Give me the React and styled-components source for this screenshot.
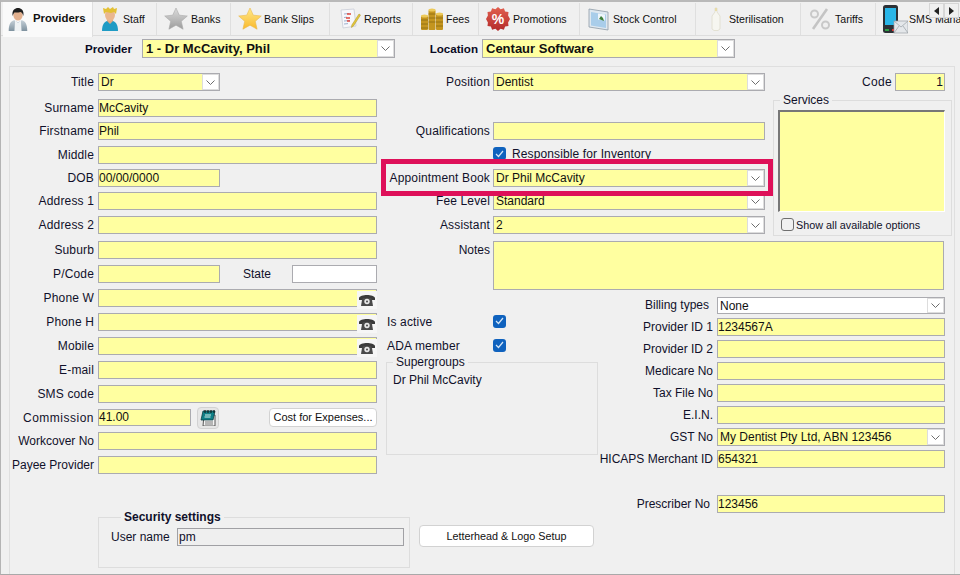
import styled, { createGlobalStyle } from "styled-components";

const GlobalStyle = createGlobalStyle`
  html, body {
    margin: 0;
    padding: 0;
    background: #f0f0f0;
  }
  * {
    box-sizing: border-box;
  }
`;

// TAB ICONS
const ProviderIcon = () => (
  <svg width="20" height="25" viewBox="0 0 28 32">
    <defs>
      <linearGradient id="jacket" x1="0" y1="0" x2="0" y2="1">
        <stop offset="0" stopColor="#c5d0d8" />
        <stop offset="1" stopColor="#7f929f" />
      </linearGradient>
    </defs>
    <path d="M1 32c0-10 3-14 8-15l5 3 5-3c5 1 8 5 8 15z" fill="url(#jacket)" />
    <path d="M10 17l4 4 4-4 1 15H9z" fill="#eef2f4" />
    <ellipse cx="14" cy="10" rx="6.5" ry="7.5" fill="#e2b08e" />
    <path d="M6.5 11C5 3 10 0 14 0s9 3 7.5 11c-1-3-2-5-4-5.500-3 1-7 1-8 .5-1.500 1-2 3-3 5z" fill="#1f1f1f" />
  </svg>
);

const StaffIcon = () => (
  <svg width="18" height="24" viewBox="0 0 18 24">
    <path d="M1 24c0-6 2-9 5-10h6c3 1 5 4 5 10z" fill="#1f9bc4" />
    <path d="M6 14l3 3 3-3v-2H6z" fill="#e3a77f" />
    <ellipse cx="9" cy="8" rx="5" ry="6" fill="#eab78f" />
    <path d="M3 7L2 1l3 1 2-2 2 2 3-2 1 2 3-1-1 6-2-2-3 1-5-1z" fill="#e3c034" />
  </svg>
);

const StarIcon = ({ id, from, to, edge }) => (
  <svg width="24" height="24" viewBox="0 0 24 24">
    <defs>
      <linearGradient id={id} x1="0" y1="0" x2="0" y2="1">
        <stop offset="0" stopColor={from} />
        <stop offset="1" stopColor={to} />
      </linearGradient>
    </defs>
    <path
      d="M12 1l3.300 7.200 8 .8-6 5.300 1.800 7.900L12 18.200 4.900 22.200l1.800-7.900-6-5.300 8-.8z"
      fill={`url(#${id})`}
      stroke={edge}
      strokeWidth=".6"
    />
  </svg>
);

const ReportIcon = () => (
  <svg width="22" height="22" viewBox="0 0 22 22">
    <path d="M2 2l13-1 2 17-13 2z" fill="#f7f7fb" stroke="#c8cbd6" strokeWidth=".8" />
    <path d="M5 6l5-.5M5 9.500l3-.3M5 13l6-.5M5 16l4-.4" stroke="#9db1cf" strokeWidth="1" />
    <path d="M8 6h4M7 10h4M8 13h3" stroke="#e0473f" strokeWidth="1.400" />
    <path d="M20 6l1.500 1-7 11-2 1.500.3-2.500z" fill="#e4c83b" stroke="#a98f25" strokeWidth=".5" />
  </svg>
);

const CoinStack = ({ x, top }) => (
  <g>
    <rect x={x} y={top} width="7" height={22 - top} rx="1" fill="#c4951f" />
    <ellipse cx={x + 3.5} cy={top} rx="3.500" ry="1.500" fill="#edca5a" />
    <path
      d={`M${x} ${top + 4}h7M${x} ${top + 8}h7M${x} ${top + 12}h7`}
      stroke="#8c6a12"
      strokeWidth=".8"
    />
  </g>
);

const CoinsIcon = () => (
  <svg width="23" height="23" viewBox="0 0 23 23">
    <CoinStack x={0} top={8} />
    <CoinStack x={7.5} top={2} />
    <CoinStack x={15} top={6} />
  </svg>
);

const PromoIcon = () => (
  <svg width="24" height="24" viewBox="0 0 24 24">
    <defs>
      <linearGradient id="promo" x1="0" y1="0" x2="0" y2="1">
        <stop offset="0" stopColor="#e2604f" />
        <stop offset="1" stopColor="#b32a2a" />
      </linearGradient>
    </defs>
    <path
      d="M12 0l2.600 2.300 3.300-1 1.200 3.200 3.400.6-.4 3.400L24 12l-1.900 3.500.4 3.400-3.400.6-1.200 3.200-3.300-1L12 24l-2.600-2.300-3.300 1-1.200-3.200-3.400-.6.4-3.400L0 12l1.900-3.500-.4-3.400 3.400-.6 1.200-3.200 3.300 1z"
      fill="url(#promo)"
    />
    <text x="12" y="17" textAnchor="middle" fontFamily="Liberation Sans" fontWeight="bold" fontSize="14" fill="#fff">
      %
    </text>
  </svg>
);

const StockIcon = () => (
  <svg width="22" height="23" viewBox="0 0 22 23">
    <path d="M1 1l19 3v18L1 19z" fill="#dfe8f0" stroke="#8d9aa6" strokeWidth=".8" />
    <path d="M3 4l15 2.400v13.600L3 17.600z" fill="#a9cdea" />
    <path d="M10 5.500l7 1v6l-7-1z" fill="#eef5fa" />
    <path d="M11 11l2-3 2 2 1 3z" fill="#3d7f3a" />
  </svg>
);

const BottleIcon = () => (
  <svg width="13" height="24" viewBox="0 0 13 24">
    <path d="M5 1h2v4l3 4v13l-2 1.500H4L2 22V9l3-4z" fill="#f6f6f0" stroke="#dedccb" strokeWidth=".8" />
    <path d="M5 1h2v3H5z" fill="#e8dca8" />
  </svg>
);

const TariffIcon = () => (
  <svg width="22" height="22" viewBox="0 0 22 22">
    <circle cx="5.500" cy="6" r="3.500" fill="none" stroke="#c9c9c9" strokeWidth="2" />
    <circle cx="16.500" cy="17" r="3.500" fill="none" stroke="#c9c9c9" strokeWidth="2" />
    <path d="M18 1L4 21" stroke="#c4c4c4" strokeWidth="2.600" />
  </svg>
);

const SmsIcon = () => (
  <svg width="26" height="30" viewBox="0 0 26 30">
    <rect x="1" y="1" width="15" height="28" rx="2.500" fill="#2c3136" />
    <rect x="3" y="4" width="11" height="17" fill="#29b6e8" />
    <rect x="3" y="25" width="4" height="2" fill="#2f9e44" />
    <rect x="10" y="25" width="4" height="2" fill="#d8322f" />
    <rect x="12" y="17" width="14" height="12" fill="#e4e7ea" stroke="#9aa0a6" strokeWidth=".7" />
    <path d="M12 17l7 6 7-6M12 29l5-7M26 29l-5-7" fill="none" stroke="#9aa0a6" strokeWidth=".7" />
  </svg>
);

// SMALL FORM ICONS
const Chevron = () => (
  <svg width="9" height="5" viewBox="0 0 9 5">
    <path d="M.5.500l4 4 4-4" fill="none" stroke="#6d6d6d" />
  </svg>
);

const PhoneGlyph = () => (
  <svg width="16" height="12" viewBox="0 0 16 12">
    <path d="M0 4C1 0 15 0 16 4v2h-4V4H4v2H0z" fill="#3b3b3b" />
    <path d="M3 6l1-2h8l1 2 1 6H2z" fill="#4a4a4a" />
    <circle cx="8" cy="7.500" r="2.700" fill="#e8e8e8" />
    <circle cx="8" cy="7.500" r="1" fill="#4a4a4a" />
  </svg>
);

const NoteGlyph = () => (
  <svg width="16" height="16" viewBox="0 0 16 16">
    <path d="M4 5h11v11H3z" fill="#f4f4f4" stroke="#333" strokeWidth=".8" />
    <path d="M3 1h12l-2 9H1z" fill="#0f7f86" stroke="#0a3f44" strokeWidth=".8" />
    <path d="M5 0v3M8 0v3M11 0v3M14 0v3" stroke="#111" />
    <path d="M5 5h6M4.500 7h6" stroke="#d7f0e9" />
    <path d="M5 12h8M5 14h8" stroke="#777" />
  </svg>
);

const TABS = [
  { label: "Providers", w: 90, pad: 5, slot: 25, icon: <ProviderIcon />, active: true },
  { label: "Staff", w: 64, pad: 8, slot: 22, icon: <StaffIcon /> },
  { label: "Banks", w: 74, pad: 7, slot: 27, icon: <StarIcon id="starGrey" from="#dcdcdc" to="#9c9c9c" edge="#aaa" /> },
  { label: "Bank Slips", w: 99, pad: 7, slot: 26, icon: <StarIcon id="starGold" from="#ffe98a" to="#f9b92c" edge="#e9b94d" /> },
  { label: "Reports", w: 83, pad: 9, slot: 25, icon: <ReportIcon /> },
  { label: "Fees", w: 66, pad: 8, slot: 25, icon: <CoinsIcon /> },
  { label: "Promotions", w: 101, pad: 7, slot: 27, icon: <PromoIcon /> },
  { label: "Stock Control", w: 116, pad: 8, slot: 25, icon: <StockIcon /> },
  { label: "Sterilisation", w: 105, pad: 14, slot: 19, icon: <BottleIcon /> },
  { label: "Tariffs", w: 75, pad: 8, slot: 26, icon: <TariffIcon /> },
  { label: "SMS Manager", w: 90, pad: 6, slot: 27, icon: <SmsIcon /> },
];

const Field = ({ label, value, top, w, lw, nudge, gap, tight }) => (
  <Row $top={top}>
    <Label $w={lw} $nudge={nudge} $tight={tight}>
      {label}
    </Label>
    <FieldBox $w={w} $gap={gap}>
      {value}
    </FieldBox>
  </Row>
);

const Combo = ({ label, value, top, w, lw, nudge, white, h, tight }) => (
  <Row $top={top}>
    <Label $w={lw} $nudge={nudge} $tight={tight}>
      {label}
    </Label>
    <ComboBox $w={w} $white={white} $gap={lw === 110 ? 3 : 4} $h={h}>
      <ComboText>{value}</ComboText>
      <ComboButton>
        <Chevron />
      </ComboButton>
    </ComboBox>
  </Row>
);

const PhoneField = ({ label, top }) => (
  <Row $top={top}>
    <Label $w={84}>{label}</Label>
    <FieldBox $w={279} />
    <PhoneButton>
      <PhoneGlyph />
    </PhoneButton>
  </Row>
);

const Tick = () => (
  <CheckBox>
    <svg width="9" height="8" viewBox="0 0 9 8">
      <path d="M1 4l2.500 2.500L8 1" fill="none" stroke="#d5e6f7" strokeWidth="1.200" />
    </svg>
  </CheckBox>
);

const App = () => {
  return (
    <Window>
      <GlobalStyle />
      <TabStrip>
        {TABS.map((t) => (
          <Tab key={t.label} $w={t.w} $pad={t.pad} $active={t.active}>
            <TabIcon $slot={t.slot}>{t.icon}</TabIcon>
            <TabLabel $active={t.active}>{t.label}</TabLabel>
          </Tab>
        ))}
        <Scroller>
          <ScrollButton>
            <svg width="5" height="8" viewBox="0 0 5 8">
              <path d="M5 0v8L0 4z" fill="#222" />
            </svg>
          </ScrollButton>
          <ScrollButton>
            <svg width="5" height="8" viewBox="0 0 5 8">
              <path d="M0 0v8l5-4z" fill="#222" />
            </svg>
          </ScrollButton>
        </Scroller>
      </TabStrip>

      <HeaderRow>
        <HeaderLabel $w={131}>Provider</HeaderLabel>
        <HeaderCombo $w={253} $left={10}>
          <HeaderValue>1 - Dr McCavity, Phil</HeaderValue>
          <ComboButton>
            <Chevron />
          </ComboButton>
        </HeaderCombo>
        <HeaderLabel $w={83}>Location</HeaderLabel>
        <HeaderCombo $w={253} $left={4}>
          <HeaderValue>Centaur Software</HeaderValue>
          <ComboButton>
            <Chevron />
          </ComboButton>
        </HeaderCombo>
      </HeaderRow>

      <Frame>
        <Columns>
          <LeftColumn>
            <Combo label="Title" value="Dr" top={0} lw={84} w={122} />
            <Field label="Surname" value="McCavity" top={8} lw={84} w={279} />
            <Field label="Firstname" value="Phil" top={5} lw={84} w={279} />
            <Field label="Middle" top={6} lw={84} w={279} />
            <Field label="DOB" value="00/00/0000" top={5} lw={84} w={122} />
            <Field label="Address 1" top={5} lw={84} w={279} />
            <Field label="Address 2" top={6} lw={84} w={279} />
            <Field label="Suburb" top={7} lw={84} w={279} />
            <Row $top={6}>
              <Label $w={84}>P/Code</Label>
              <FieldBox $w={122} />
              <StateLabel>State</StateLabel>
              <StateBox />
            </Row>
            <PhoneField label="Phone W" top={6} />
            <PhoneField label="Phone H" top={6} />
            <PhoneField label="Mobile" top={6} />
            <Field label="E-mail" top={6} lw={84} w={279} />
            <Field label="SMS code" top={6} lw={84} w={279} />
            <Row $top={6} $h={17}>
              <CommissionLabel>Commission</CommissionLabel>
              <FieldBox $w={93} $h={17}>
                41.00
              </FieldBox>
              <NoteButton>
                <NoteGlyph />
              </NoteButton>
              <CostButton>Cost for Expenses...</CostButton>
            </Row>
            <Field label="Workcover No" top={6} lw={84} w={279} tight />
            <Field label="Payee Provider" top={6} lw={84} w={279} tight />
          </LeftColumn>

          <RightArea>
            <TopRow>
              <MidColumn>
                <Combo label="Position" value="Dentist" top={0} lw={110} w={272} />
                <Field label="Qualifications" top={31} lw={110} w={272} gap={3} />
                <CheckRow>
                  <Tick />
                  <CheckText>Responsible for Inventory</CheckText>
                </CheckRow>
                <Combo label="Appointment Book" value="Dr Phil McCavity" top={9} lw={110} w={272} />
                <Combo label="Fee Level" value="Standard" top={5} lw={110} w={272} />
                <Combo label="Assistant" value="2" top={6} lw={110} w={272} />
              </MidColumn>

              <SideColumn>
                <CodeRow>
                  <CodeLabel>Code</CodeLabel>
                  <CodeBox>1</CodeBox>
                </CodeRow>
                <ServicesBox>
                  <Legend $left={2}>Services</Legend>
                  <ServicesList />
                  <ShowAllRow>
                    <EmptyCheck />
                    <ShowAllText>Show all available options</ShowAllText>
                  </ShowAllRow>
                </ServicesBox>
              </SideColumn>

              <Highlight />
            </TopRow>

            <NotesRow>
              <NotesLabel>Notes</NotesLabel>
              <NotesBox />
            </NotesRow>

            <BottomRow>
              <FlagColumn>
                <FlagRow>
                  <FlagLabel>Is active</FlagLabel>
                  <Tick />
                </FlagRow>
                <FlagRow>
                  <FlagLabel>ADA member</FlagLabel>
                  <Tick />
                </FlagRow>
                <GroupBox>
                  <Legend $left={0}>Supergroups</Legend>
                  <GroupItem>Dr Phil McCavity</GroupItem>
                </GroupBox>
              </FlagColumn>

              <IdColumn>
                <Combo label="Billing types" value="None" top={0} lw={115} nudge={4} w={228} white h={17} tight />
                <Field label="Provider ID 1" value="1234567A" top={4} lw={115} w={228} tight />
                <Field label="Provider ID 2" top={4} lw={115} w={228} tight />
                <Field label="Medicare No" top={4} lw={115} w={228} tight />
                <Field label="Tax File No" top={4} lw={115} w={228} tight />
                <Field label="E.I.N." top={4} lw={115} w={228} tight />
                <Combo label="GST No" value="My Dentist Pty Ltd, ABN 123456" top={4} lw={115} w={228} tight />
                <Field label="HICAPS Merchant ID" value="654321" top={4} lw={115} w={228} tight />
                <Field label="Prescriber No" value="123456" top={27} lw={115} nudge={3} w={228} tight />
              </IdColumn>
            </BottomRow>
          </RightArea>
        </Columns>

        <SecurityRow>
          <SecurityBox>
            <SecurityLegend>Security settings</SecurityLegend>
            <UserRow>
              <UserLabel>User name</UserLabel>
              <UserBox>pm</UserBox>
            </UserRow>
          </SecurityBox>
          <LogoButton>Letterhead &amp; Logo Setup</LogoButton>
        </SecurityRow>
      </Frame>
    </Window>
  );
};

export default App;

const FONT = `"Liberation Sans", Arial, sans-serif`;

const Window = styled.div`
  position: relative;
  display: flex;
  flex-direction: column;
  width: 960px;
  height: 575px;
  overflow: hidden;
  background: #f0f0f0;
  border-top: 2px solid #b9b9b9;
  border-left: 1px solid #b4b4b4;
  border-bottom: 1px solid #a9a9a9;
  font-family: ${FONT};
  font-size: 12px;
  color: #10102a;
`;

const TabStrip = styled.div`
  position: relative;
  display: flex;
  flex: none;
  height: 34px;
  padding-left: 2px;
  border-bottom: 1px solid #dddddd;
`;

const Tab = styled.div`
  display: flex;
  flex: none;
  align-items: center;
  width: ${(p) => p.$w}px;
  padding-left: ${(p) => p.$pad}px;
  margin-top: ${(p) => (p.$active ? 0 : 1)}px;
  height: ${(p) => (p.$active ? 35 : 32)}px;
  background: ${(p) => (p.$active ? "#fafafa" : "#f0f0f0")};
  border-right: 1px solid #dfdfdf;
  white-space: nowrap;
  z-index: ${(p) => (p.$active ? 1 : 0)};
`;

const TabIcon = styled.div`
  display: flex;
  align-items: center;
  flex: none;
  width: ${(p) => p.$slot}px;
`;

const TabLabel = styled.span`
  font-size: ${(p) => (p.$active ? 11.4 : 10.6)}px;
  font-weight: ${(p) => (p.$active ? "bold" : "normal")};
  color: #111;
  margin-top: ${(p) => (p.$active ? -3 : 0)}px;
`;

const Scroller = styled.div`
  position: absolute;
  top: 1px;
  right: 1px;
  display: flex;
  z-index: 2;
`;

const ScrollButton = styled.div`
  display: flex;
  align-items: center;
  justify-content: center;
  width: 15px;
  height: 15px;
  background: #f0f0f0;
  border: 1px solid #d6d6d6;
`;

const HeaderRow = styled.div`
  display: flex;
  flex: none;
  align-items: center;
  height: 18px;
  margin-top: 3px;
`;

const HeaderLabel = styled.div`
  flex: none;
  width: ${(p) => p.$w}px;
  font-size: 11.6px;
  font-weight: bold;
  text-align: right;
  color: #0a0a24;
`;

const HeaderCombo = styled.div`
  display: flex;
  flex: none;
  align-items: stretch;
  width: ${(p) => p.$w}px;
  height: 19px;
  margin-left: ${(p) => p.$left}px;
  background: #ffffa0;
  border: 1px solid #a9a9ae;
`;

const HeaderValue = styled.div`
  flex: 1;
  padding-left: 3px;
  font-size: 13px;
  font-weight: bold;
  line-height: 17px;
  color: #111;
`;

const Frame = styled.div`
  flex: 1;
  width: 946px;
  margin: 9px 0 0 8px;
  padding-top: 6px;
  border: 1px solid #dfdfdf;
  border-bottom: none;
`;

const Columns = styled.div`
  display: flex;
`;

const LeftColumn = styled.div`
  flex: none;
  width: 367px;
`;

const Row = styled.div`
  position: relative;
  display: flex;
  align-items: center;
  height: ${(p) => p.$h || 18}px;
  margin-top: ${(p) => p.$top}px;
`;

const Label = styled.div`
  flex: none;
  width: ${(p) => p.$w}px;
  padding-right: ${(p) => p.$nudge || 0}px;
  letter-spacing: ${(p) => (p.$tight ? 0 : 0.15)}px;
  text-align: right;
  white-space: nowrap;
`;

const CommissionLabel = styled.div`
  flex: none;
  width: 84px;
  letter-spacing: 0.5px;
  text-align: right;
  white-space: nowrap;
`;

const FieldBox = styled.div`
  flex: none;
  width: ${(p) => p.$w}px;
  height: ${(p) => p.$h || 18}px;
  margin-left: ${(p) => p.$gap || 4}px;
  padding-left: 0;
  background: #ffffa0;
  border: 1px solid #ababb0;
  line-height: ${(p) => (p.$h || 18) - 2}px;
  color: #111;
  white-space: nowrap;
`;

const ComboBox = styled.div`
  display: flex;
  flex: none;
  align-items: stretch;
  width: ${(p) => p.$w}px;
  height: ${(p) => p.$h || 18}px;
  margin-left: ${(p) => p.$gap}px;
  background: ${(p) => (p.$white ? "#ffffff" : "#ffffa0")};
  border: 1px solid #ababb0;
`;

const ComboText = styled.div`
  flex: 1;
  padding-left: 2px;
  line-height: 16px;
  color: #111;
  white-space: nowrap;
`;

const ComboButton = styled.div`
  display: flex;
  flex: none;
  align-items: center;
  justify-content: center;
  width: 17px;
  background: #ffffff;
  border: 1px solid #dddddd;
`;

const StateLabel = styled.div`
  flex: none;
  width: 72px;
  padding-left: 23px;
`;

const StateBox = styled.div`
  flex: none;
  width: 85px;
  height: 18px;
  background: #ffffff;
  border: 1px solid #ababb0;
`;

const PhoneButton = styled.div`
  position: absolute;
  right: 0;
  top: 2px;
  display: flex;
  align-items: center;
  justify-content: center;
  width: 20px;
  height: 18px;
  background: #f6f6f6;
`;

const NoteButton = styled.div`
  display: flex;
  flex: none;
  align-items: center;
  justify-content: center;
  width: 22px;
  height: 22px;
  margin-left: 6px;
  background: #e6e6e6;
  border: 1px solid #d2d2d2;
  border-radius: 4px;
`;

const CostButton = styled.div`
  flex: none;
  width: 108px;
  height: 19px;
  margin-left: 50px;
  background: #ffffff;
  border: 1px solid #d2d2d2;
  border-radius: 4px;
  font-size: 11px;
  line-height: 17px;
  text-align: center;
  color: #111;
  white-space: nowrap;
`;

const RightArea = styled.div`
  flex: none;
  width: 575px;
  margin-left: 3px;
`;

const TopRow = styled.div`
  position: relative;
  display: flex;
  align-items: flex-start;
`;

const MidColumn = styled.div`
  flex: none;
  width: 385px;
`;

const CheckRow = styled.div`
  display: flex;
  align-items: center;
  height: 13px;
  margin: 7px 0 0 113px;
`;

const CheckBox = styled.div`
  display: flex;
  flex: none;
  align-items: center;
  justify-content: center;
  width: 13px;
  height: 13px;
  background: #0f62be;
  border-radius: 3px;
`;

const CheckText = styled.span`
  margin-left: 6px;
  letter-spacing: 0.12px;
  white-space: nowrap;
`;

const SideColumn = styled.div`
  flex: none;
  width: 179px;
  margin-left: 8px;
`;

const CodeRow = styled.div`
  display: flex;
  align-items: center;
  justify-content: flex-end;
  height: 18px;
  padding-right: 7px;
`;

const CodeLabel = styled.div`
  margin-right: 3px;
  letter-spacing: 0.3px;
`;

const CodeBox = styled.div`
  width: 50px;
  height: 18px;
  padding-right: 1px;
  background: #ffffa0;
  border: 1px solid #ababb0;
  line-height: 16px;
  text-align: right;
`;

// FIELDSET PADDING ALSO MOVES THE LEGEND, SO THE OFFSET DIFFERS PER BOX
const Legend = styled.legend`
  margin-left: ${(p) => p.$left}px;
  padding: 0 3px;
  line-height: 13px;
`;

const ServicesBox = styled.fieldset`
  display: block;
  height: 142px;
  margin: 3px 0 0;
  padding: 3px 0 0 4px;
  min-width: 0;
  border: 1px solid #dddddd;
`;

const ServicesList = styled.div`
  width: 167px;
  height: 102px;
  background: #ffffa0;
  border: 1px solid #ffffff;
  border-top: 2px solid #777777;
  border-left: 2px solid #777777;
`;

const ShowAllRow = styled.div`
  display: flex;
  align-items: center;
  height: 13px;
  margin: 6px 0 0 3px;
`;

const EmptyCheck = styled.div`
  flex: none;
  width: 13px;
  height: 13px;
  border: 1px solid #6f6f6f;
  border-radius: 3px;
`;

const ShowAllText = styled.span`
  margin-left: 2px;
  font-size: 10.8px;
  white-space: nowrap;
`;

const Highlight = styled.div`
  position: absolute;
  top: 86px;
  left: 1px;
  width: 392px;
  height: 37px;
  border: 5px solid #de1059;
  pointer-events: none;
`;

const NotesRow = styled.div`
  display: flex;
  margin-top: 5px;
`;

const NotesLabel = styled.div`
  flex: none;
  width: 110px;
  padding-top: 2px;
  text-align: right;
`;

const NotesBox = styled.div`
  flex: none;
  width: 451px;
  height: 49px;
  margin-left: 3px;
  background: #ffffa0;
  border: 1px solid #ababb0;
`;

const BottomRow = styled.div`
  display: flex;
  align-items: flex-start;
  margin-top: 6px;
`;

const FlagColumn = styled.div`
  flex: none;
  width: 218px;
  padding-top: 18px;
`;

const FlagRow = styled.div`
  display: flex;
  align-items: center;
  height: 14px;
  margin-bottom: 10px;
`;

const FlagLabel = styled.div`
  flex: none;
  width: 113px;
  padding: 1px 0 0 7px;
  letter-spacing: 0.15px;
`;

const GroupBox = styled.fieldset`
  display: block;
  width: 212px;
  height: 99px;
  margin: -6px 0 0 6px;
  padding: 4px 0 0 6px;
  min-width: 0;
  border: 1px solid #dddddd;
`;

const GroupItem = styled.div`
  line-height: 14px;
  white-space: nowrap;
`;

const IdColumn = styled.div`
  flex: none;
  width: 347px;
`;

const SecurityRow = styled.div`
  display: flex;
  align-items: flex-start;
  margin-top: -3px;
  padding-left: 88px;
`;

const SecurityBox = styled.fieldset`
  display: block;
  width: 312px;
  height: 58px;
  margin: 0;
  padding: 4px 0 0 12px;
  min-width: 0;
  border: 1px solid #dddddd;
`;

const SecurityLegend = styled.legend`
  margin-left: 10px;
  padding: 0 3px;
  font-weight: bold;
  line-height: 14px;
`;

const UserRow = styled.div`
  display: flex;
  align-items: center;
`;

const UserLabel = styled.div`
  flex: none;
  width: 66px;
`;

const UserBox = styled.div`
  flex: none;
  width: 227px;
  height: 18px;
  padding-left: 1px;
  background: #efefef;
  border: 1px solid #a0a0a4;
  line-height: 16px;
`;

const LogoButton = styled.div`
  flex: none;
  width: 175px;
  height: 22px;
  margin: 15px 0 0 9px;
  background: #ffffff;
  border: 1px solid #d2d2d2;
  border-radius: 4px;
  font-size: 10.8px;
  line-height: 20px;
  text-align: center;
  color: #111;
`;
